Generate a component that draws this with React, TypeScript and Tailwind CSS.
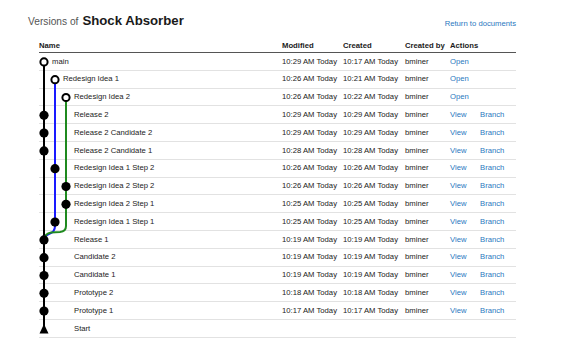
import React from "react";

type Row = {
  name: string;
  indent: number;
  modified: string;
  created: string;
  open?: boolean;
  start?: boolean;
};

const rows: Row[] = [
  { name: "main", indent: 13, modified: "10:29 AM Today", created: "10:17 AM Today", open: true },
  { name: "Redesign Idea 1", indent: 24, modified: "10:26 AM Today", created: "10:21 AM Today", open: true },
  { name: "Redesign Idea 2", indent: 35, modified: "10:26 AM Today", created: "10:22 AM Today", open: true },
  { name: "Release 2", indent: 35, modified: "10:29 AM Today", created: "10:29 AM Today" },
  { name: "Release 2 Candidate 2", indent: 35, modified: "10:29 AM Today", created: "10:29 AM Today" },
  { name: "Release 2 Candidate 1", indent: 35, modified: "10:28 AM Today", created: "10:28 AM Today" },
  { name: "Redesign Idea 1 Step 2", indent: 35, modified: "10:26 AM Today", created: "10:26 AM Today" },
  { name: "Redesign Idea 2 Step 2", indent: 35, modified: "10:26 AM Today", created: "10:26 AM Today" },
  { name: "Redesign Idea 2 Step 1", indent: 35, modified: "10:25 AM Today", created: "10:25 AM Today" },
  { name: "Redesign Idea 1 Step 1", indent: 35, modified: "10:25 AM Today", created: "10:25 AM Today" },
  { name: "Release 1", indent: 35, modified: "10:19 AM Today", created: "10:19 AM Today" },
  { name: "Candidate 2", indent: 35, modified: "10:19 AM Today", created: "10:19 AM Today" },
  { name: "Candidate 1", indent: 35, modified: "10:19 AM Today", created: "10:19 AM Today" },
  { name: "Prototype 2", indent: 35, modified: "10:18 AM Today", created: "10:18 AM Today" },
  { name: "Prototype 1", indent: 35, modified: "10:17 AM Today", created: "10:17 AM Today" },
  { name: "Start", indent: 35, modified: "", created: "", start: true },
];

// graph column for each row (x inside the svg)
const cols = [5, 16, 27, 5, 5, 5, 16, 27, 27, 16, 5, 5, 5, 5, 5, 5];
const RH = 17.8;
const cy = (i: number) => RH / 2 + RH * i;

function Graph() {
  return (
    <svg className="absolute left-0 top-0 pointer-events-none" width="40" height="290">
      <line x1="5" y1={cy(0)} x2="5" y2={cy(15)} stroke="#000" strokeWidth="2" />
      <path
        d={`M16 ${cy(1)} V173 Q16 179 10 181 Q5 183 5 ${cy(10)}`}
        fill="none"
        stroke="#1a1aff"
        strokeWidth="2"
      />
      <path
        d={`M27 ${cy(2)} V173 Q27 178.5 21 179 L12 179.5 Q6 180.5 5 ${cy(10)}`}
        fill="none"
        stroke="#1f8a1f"
        strokeWidth="2"
      />
      {rows.map((r, i) =>
        r.start ? (
          <polygon key={i} points={`5,${cy(i) - 5} 9.5,${cy(i) + 4.5} 0.5,${cy(i) + 4.5}`} fill="#000" />
        ) : r.open ? (
          <circle key={i} cx={cols[i]} cy={cy(i)} r="3.6" fill="#fff" stroke="#000" strokeWidth="2" />
        ) : (
          <circle key={i} cx={cols[i]} cy={cy(i)} r="4.6" fill="#000" />
        )
      )}
    </svg>
  );
}

export default function App() {
  return (
    <div
      className="w-[576px] h-[349px] bg-white pl-[28px] pr-[60px] pt-[11px] text-[#222]"
      style={{ fontFamily: '"Liberation Sans", Arial, sans-serif' }}
    >
      <div className="flex items-end justify-between h-[20px]">
        <div className="flex items-baseline gap-[4px]">
          <span className="text-[10.2px] text-[#555]">Versions of</span>
          <span className="text-[13.2px] font-bold text-[#1a1a1a]">Shock Absorber</span>
        </div>
        <a className="text-[7.7px] text-[#2a78c0] mb-[1px]">Return to documents</a>
      </div>

      <div className="ml-[11px] mt-[9px] text-[7.7px]">
        <div className="grid grid-cols-[243px_61px_62px_45px_30px_1fr] h-[13px] items-center border-b border-[#555] font-bold text-[#1a1a1a]">
          <div>Name</div>
          <div>Modified</div>
          <div>Created</div>
          <div>Created by</div>
          <div>Actions</div>
          <div />
        </div>
        <div className="relative">
          <Graph />
          {rows.map((r, i) => (
            <div
              key={i}
              className="grid grid-cols-[243px_61px_62px_45px_30px_1fr] h-[17.8px] items-center border-b border-[#e2e2e2]"
            >
              <div style={{ paddingLeft: r.indent }}>{r.name}</div>
              <div>{r.modified}</div>
              <div>{r.created}</div>
              <div>{r.start ? "" : "bminer"}</div>
              <div className="text-[#2a78c0]">{r.start ? "" : r.open ? "Open" : "View"}</div>
              <div className="text-[#2a78c0]">{r.start || r.open ? "" : "Branch"}</div>
            </div>
          ))}
        </div>
      </div>
    </div>
  );
}
